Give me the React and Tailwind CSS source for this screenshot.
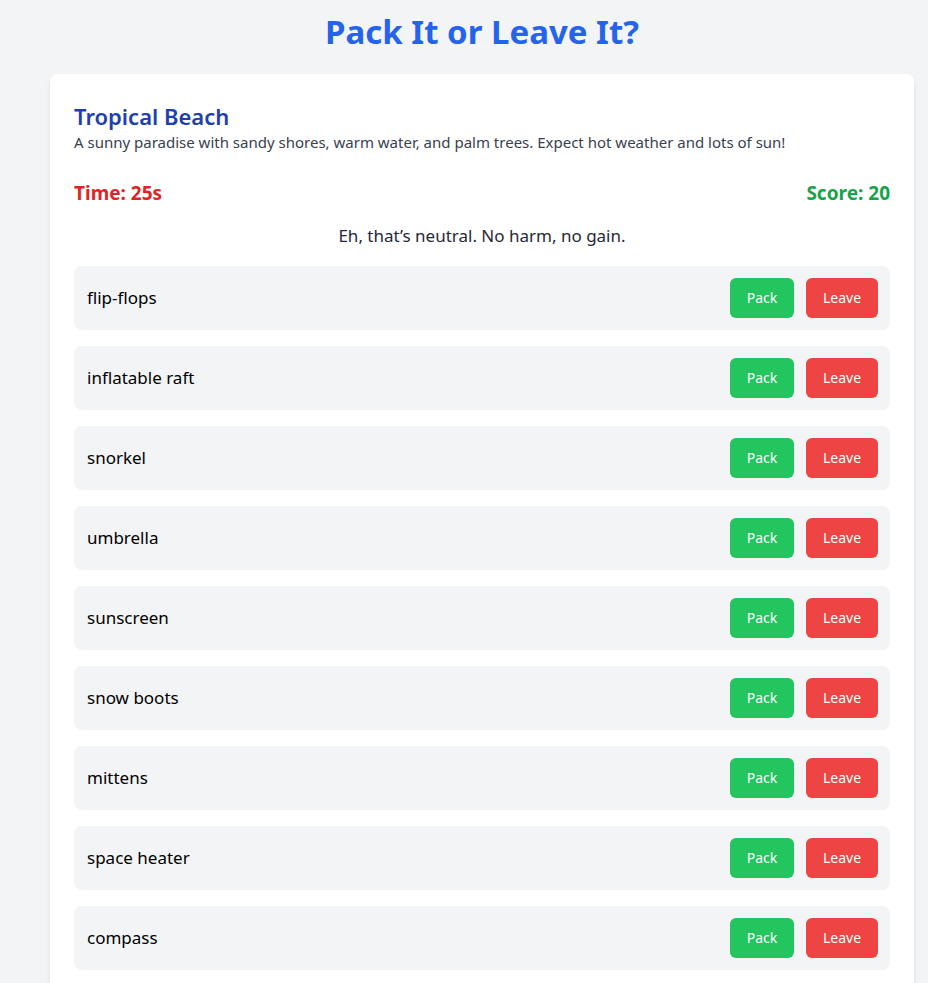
import React from 'react';

const items = [
    'flip-flops',
    'inflatable raft',
    'snorkel',
    'umbrella',
    'sunscreen',
    'snow boots',
    'mittens',
    'space heater',
    'compass',
];

const App = () => {
    return (
        <div className="min-h-screen bg-[#f3f4f6] text-gray-900" style={{ fontFamily: '"Segoe UI", "Noto Sans", sans-serif' }}>
            <div className="w-[864px] ml-[50px] pt-[12px]">
                <h1 className="text-[33px] font-bold text-[#2563eb] text-center leading-[40px] mb-[22px]">
                    Pack It or Leave It?
                </h1>

                <div className="bg-white rounded-lg shadow-md p-6">
                    <h2 className="text-[22px] font-semibold text-[#1e40af] leading-8 pt-[2px]">Tropical Beach</h2>
                    <p className="text-[15px] text-[#374151] leading-5">
                        A sunny paradise with sandy shores, warm water, and palm trees. Expect hot weather and lots of sun!
                    </p>

                    <div className="flex justify-between items-center mt-[27px] mb-[17px] text-[19px] font-bold leading-7">
                        <span className="text-[#dc2626]">Time: 25s</span>
                        <span className="text-[#16a34a]">Score: 20</span>
                    </div>

                    <p className="text-center text-[17px] text-[#1f2937] leading-6 mb-[18px]">
                        Eh, that’s neutral. No harm, no gain.
                    </p>

                    <div className="flex flex-col gap-4">
                        {items.map((item) => (
                            <div key={item} className="flex items-center justify-between bg-[#f3f4f6] rounded-lg p-3">
                                <span className="text-[17px] text-black pl-px">{item}</span>
                                <div className="flex gap-3">
                                    <button className="h-10 w-16 rounded-md bg-[#22c55e] text-white text-sm">Pack</button>
                                    <button className="h-10 w-[72px] rounded-md bg-[#ef4444] text-white text-sm">Leave</button>
                                </div>
                            </div>
                        ))}
                    </div>
                </div>
            </div>
        </div>
    );
};

export default App;
